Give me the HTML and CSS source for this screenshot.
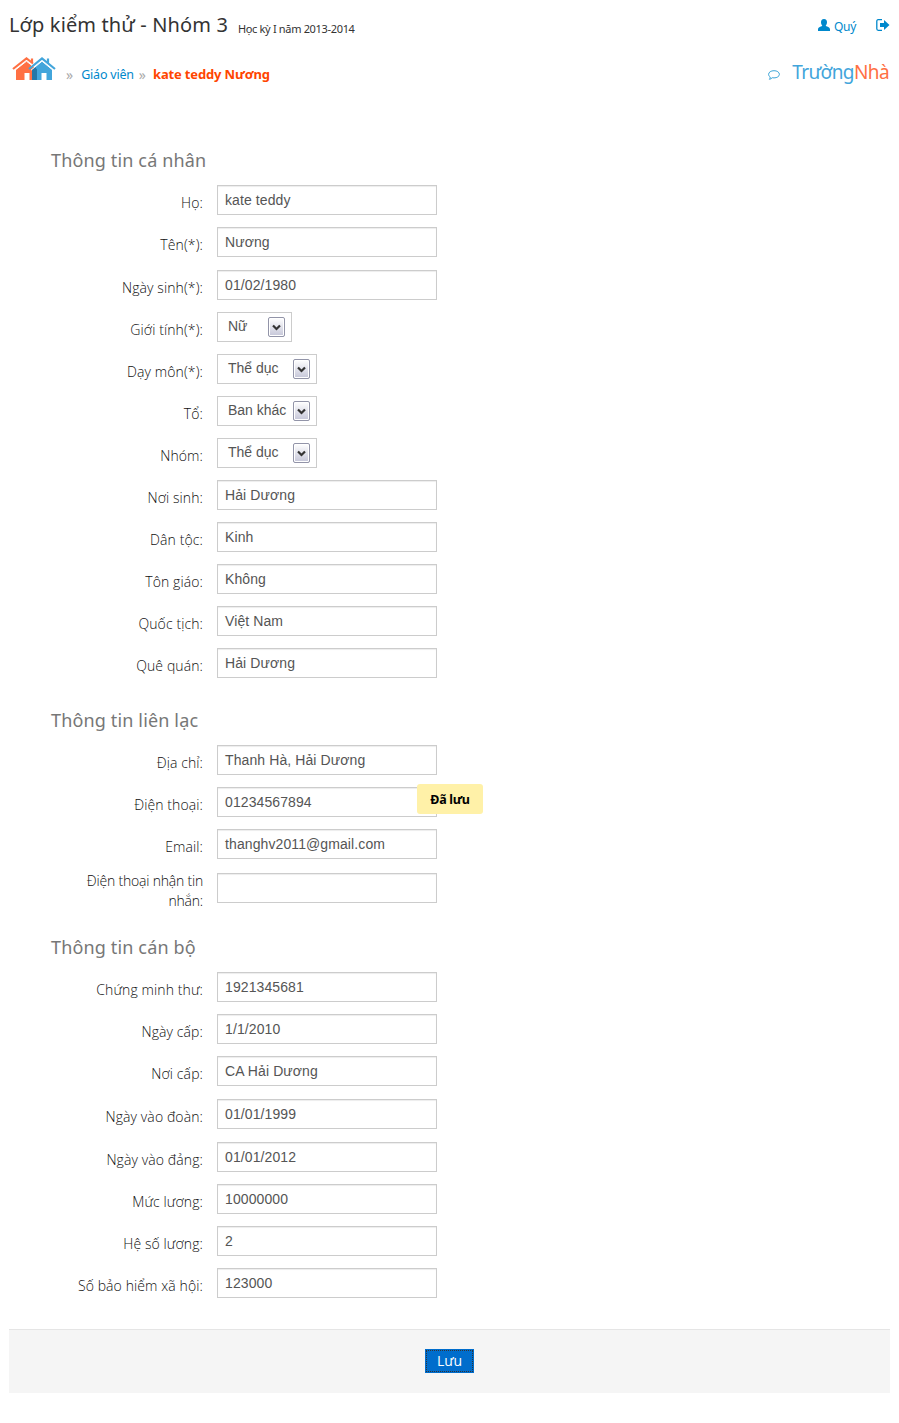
FILE: index.html
```html
<!DOCTYPE html>
<html lang="vi">
<head>
<meta charset="utf-8">
<title>kate teddy Nương</title>
<link rel="stylesheet" href="styles.css">
</head>
<body>
<header class="top">
  <h1 class="title">Lớp kiểm thử - Nhóm 3</h1>
  <span class="term">Học kỳ I năm 2013-2014</span>
  <a class="user"><svg width="12" height="12" viewBox="0 0 12 12"><path d="M6 0C3.800 0 3 1.600 3 3.300 3 4.800 3.600 5.900 4.300 6.600 4.300 7.600 0 7.800 0 10.500V12H12V10.500C12 7.800 7.700 7.600 7.700 6.600 8.400 5.900 9 4.800 9 3.300 9 1.600 8.200 0 6 0Z" fill="#08c"/></svg><span>Quý</span></a>
  <svg class="logout" width="14" height="12" viewBox="0 0 14 12"><path d="M6 .7H2.200Q.8.700.8 2.200V9.800Q.8 11.300 2.200 11.300H6" fill="none" stroke="#08c" stroke-width="1.300"/><path d="M4 4H8V1L13.500 6 8 11V8H4Z" fill="#08c"/></svg>
</header>
<nav class="crumbs">
  <svg class="houses" width="44" height="24" viewBox="0 0 44 24">
    <path d="M4 12.500L14.500 4 25 12.500V23H17.500V16H12.500V23H4Z" fill="#ff7043"/>
    <path d="M1 12L14.500 1.500 21 6.500M20 1.500V6" fill="none" stroke="#ff7043" stroke-width="2.200"/>
    <path d="M20 12.500L30 4 40 12.500V23H34.500V16H29.500V23H20Z" fill="#42a5db"/>
    <path d="M17 12L30 1.500 43 12M36 1.500V6" fill="none" stroke="#42a5db" stroke-width="2.200"/>
    <path d="M20 12.500L23 10 25 12.500V23H20Z" fill="#2377a8"/>
    <path d="M3 13.200L14.500 4.200 20 8.500M19 13.200L30 4.200 41 13.200" fill="none" stroke="#fff" stroke-width="1"/>
  </svg>
  <span class="sep">»</span><a class="link">Giáo viên</a><span class="sep sep-next">»</span><strong class="current">kate teddy Nương</strong>
  <svg class="chat" width="12" height="10" viewBox="0 0 12 10"><path d="M6 .7C9 .7 11.400 2.200 11.400 4.300 11.400 6.400 9 7.900 6 7.900 5.300 7.900 4.800 7.800 4.200 7.700 3.500 8.600 2.500 9.200 1.400 9.300 1.900 8.700 2.200 8 2.200 7 1.200 6.300.6 5.400.6 4.300.6 2.200 3 .7 6 .7Z" fill="none" stroke="#289bd3" stroke-width=".9"/></svg>
  <span class="brand"><span class="brand-blue">Trường</span><span class="brand-orange">Nhà</span></span>
</nav>
<main class="form">
  <section class="group">
    <h2 class="heading">Thông tin cá nhân</h2>
    <div class="row"><label class="label">Họ:</label><div class="input">kate teddy</div></div>
    <div class="row taller"><label class="label">Tên(*):</label><div class="input">Nương</div></div>
    <div class="row"><label class="label">Ngày sinh(*):</label><div class="input">01/02/1980</div></div>
    <div class="row"><label class="label">Giới tính(*):</label><div class="select narrow"><span>Nữ</span><i class="drop"><svg width="9" height="7" viewBox="0 0 9 7"><path d="M1 1.500L4.500 5 8 1.500" fill="none" stroke="#333" stroke-width="2.200"/></svg></i></div></div>
    <div class="row"><label class="label">Dạy môn(*):</label><div class="select"><span>Thể dục</span><i class="drop"><svg width="9" height="7" viewBox="0 0 9 7"><path d="M1 1.500L4.500 5 8 1.500" fill="none" stroke="#333" stroke-width="2.200"/></svg></i></div></div>
    <div class="row"><label class="label">Tổ:</label><div class="select"><span>Ban khác</span><i class="drop"><svg width="9" height="7" viewBox="0 0 9 7"><path d="M1 1.500L4.500 5 8 1.500" fill="none" stroke="#333" stroke-width="2.200"/></svg></i></div></div>
    <div class="row"><label class="label">Nhóm:</label><div class="select"><span>Thể dục</span><i class="drop"><svg width="9" height="7" viewBox="0 0 9 7"><path d="M1 1.500L4.500 5 8 1.500" fill="none" stroke="#333" stroke-width="2.200"/></svg></i></div></div>
    <div class="row"><label class="label">Nơi sinh:</label><div class="input">Hải Dương</div></div>
    <div class="row"><label class="label">Dân tộc:</label><div class="input">Kinh</div></div>
    <div class="row"><label class="label">Tôn giáo:</label><div class="input">Không</div></div>
    <div class="row"><label class="label">Quốc tịch:</label><div class="input">Việt Nam</div></div>
    <div class="row"><label class="label">Quê quán:</label><div class="input">Hải Dương</div></div>
  </section>
  <section class="group">
    <h2 class="heading">Thông tin liên lạc</h2>
    <div class="row"><label class="label">Địa chỉ:</label><div class="input">Thanh Hà, Hải Dương</div></div>
    <div class="row"><label class="label">Điện thoại:</label><div class="input">01234567894</div><div class="saved">Đã lưu</div></div>
    <div class="row"><label class="label">Email:</label><div class="input">thanghv2011@gmail.com</div></div>
    <div class="row double"><label class="label">Điện thoại nhận tin nhắn:</label><div class="input"></div></div>
  </section>
  <section class="group">
    <h2 class="heading">Thông tin cán bộ</h2>
    <div class="row"><label class="label">Chứng minh thư:</label><div class="input">1921345681</div></div>
    <div class="row"><label class="label">Ngày cấp:</label><div class="input">1/1/2010</div></div>
    <div class="row taller"><label class="label">Nơi cấp:</label><div class="input">CA Hải Dương</div></div>
    <div class="row taller"><label class="label">Ngày vào đoàn:</label><div class="input">01/01/1999</div></div>
    <div class="row"><label class="label">Ngày vào đảng:</label><div class="input">01/01/2012</div></div>
    <div class="row"><label class="label">Mức lương:</label><div class="input">10000000</div></div>
    <div class="row"><label class="label">Hệ số lương:</label><div class="input">2</div></div>
    <div class="row"><label class="label">Số bảo hiểm xã hội:</label><div class="input">123000</div></div>
  </section>
</main>
<footer class="actions"><button class="save">Lưu</button></footer>
</body>
</html>
```
FILE: styles.css
```css
* { box-sizing: border-box; }
body { margin: 0; padding: 0 9px; height: 1423px; background: #fff; color: #333; font-family: "Noto Sans", sans-serif; font-size: 13px; }
svg { display: block; }
.top { display: flex; height: 50px; align-items: center; }
.title { margin: 0; font-size: 20px; line-height: 40px; font-weight: 400; letter-spacing: .13px; white-space: nowrap; }
.term { margin: 7px 0 0 10px; font-size: 11px; letter-spacing: -.33px; white-space: nowrap; }
.user { display: flex; align-items: center; gap: 4px; margin-left: auto; color: #08c; font-size: 12px; letter-spacing: -.3px; }
.user span { margin-top: 2px; }
.logout { margin-left: 20px; }
.crumbs { display: flex; height: 50px; align-items: center; white-space: nowrap; }
.houses { margin: -13px 0 0 3px; }
.sep { margin: -2px 0 0 10px; color: #aaa; font-size: 14px; }
.sep-next { margin-left: 5px; }
.link { margin: -1px 0 0 8px; color: #08c; font-size: 12.500px; letter-spacing: -.2px; }
.current { margin: -2px 0 0 7px; color: #ff4500; font-size: 13px; letter-spacing: -.15px; }
.chat { margin-left: auto; }
.brand { margin: -6px 1px 0 12px; font-size: 19px; letter-spacing: -.6px; }
.brand-blue { color: #42a5db; }
.brand-orange { color: #ff7043; }
.form { padding: 40px 0 0 42px; }
.group { padding-bottom: 10px; }
.heading { margin: 0 0 5px; font-size: 18px; line-height: 40px; font-weight: 400; color: #777; letter-spacing: .15px; }
.row { display: flex; height: 30px; margin-bottom: 12px; position: relative; }
.row.taller { margin-bottom: 13px; }
.label { width: 152px; margin-right: 14px; padding-top: 8px; color: #111; font-family: "Open Sans", sans-serif; font-size: 14px; line-height: 20px; font-weight: 300; text-align: right; letter-spacing: .1px; white-space: nowrap; }
.input { width: 220px; height: 30px; padding: 0 7px; border: 1px solid #ccc; box-shadow: inset 0 1px 1px rgba(0, 0, 0, .075); color: #555; font-family: "Liberation Sans", sans-serif; font-size: 14px; line-height: 28px; letter-spacing: .1px; }
.select { display: flex; width: 100px; height: 30px; padding: 4px 6px 4px 10px; border: 1px solid #ccc; justify-content: space-between; color: #555; font-family: "Liberation Sans", sans-serif; font-size: 14px; line-height: 18px; white-space: nowrap; }
.narrow { width: 75px; }
.drop { display: flex; flex: none; width: 17px; height: 20px; border: 1px solid #9294a8; border-radius: 2px; background: linear-gradient(#fff, #c5c6d8); box-shadow: inset 0 0 0 1px #fff; align-items: center; justify-content: center; }
.saved { position: absolute; left: 366px; top: -3px; width: 66px; height: 30px; border-radius: 3px; background: #fff1a8; color: #000; font-size: 12.500px; line-height: 32px; font-weight: 700; text-align: center; letter-spacing: -.3px; }
.double.row { height: 40px; margin: 0 0 6px; }
.double .label { padding: 0 0 0 30px; letter-spacing: -.2px; white-space: normal; }
.double .input { margin-top: 2px; }
.actions { display: flex; height: 64px; margin-top: 9px; border-top: 1px solid #e5e5e5; background: #f5f5f5; justify-content: center; padding-top: 19px; }
.save { width: 49px; height: 24px; padding: 0; border: 1px solid #006dcc; outline: 1px dotted #333; outline-offset: -2px; background: #006dcc; color: #fff; font: 400 14px/20px "Open Sans", sans-serif; }
```
